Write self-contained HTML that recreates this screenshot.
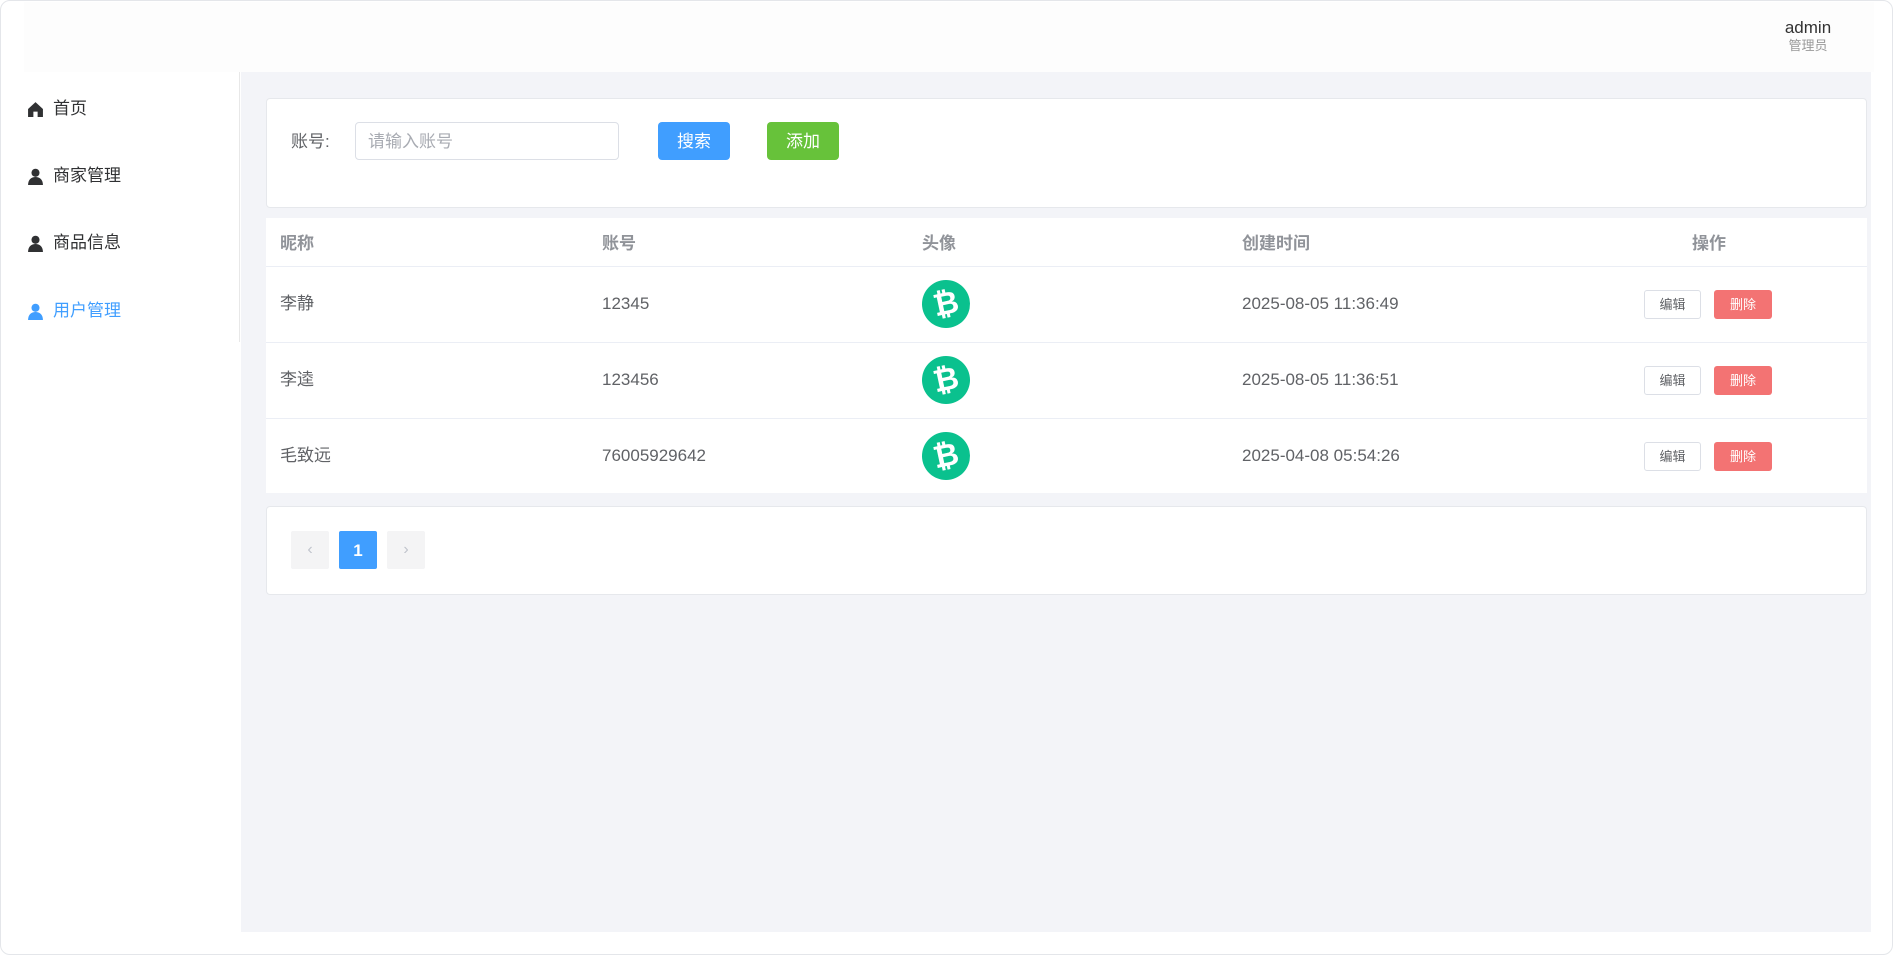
<!DOCTYPE html>
<html><head><meta charset="utf-8"><style>
*{box-sizing:border-box;margin:0;padding:0}
body{width:1893px;height:955px;background:#fff;font-family:"Liberation Sans","Noto Sans CJK SC",sans-serif;color:#606266;overflow:hidden;position:relative}
.frame{position:absolute;left:0;top:0;width:1893px;height:955px;border:1px solid #e4e6ea;border-radius:10px}
.header{position:absolute;left:24px;top:2px;width:1850px;height:70px;background:#fdfdfd}
.user{position:absolute;left:1782px;top:18px;width:52px;text-align:center}
.user .n{font-size:17px;color:#333;line-height:20px}
.user .r{font-size:13px;color:#999;line-height:15px}
.side{position:absolute;left:0;top:72px;width:240px;height:270px;border-right:1px solid #e8e8e8}
.mi{position:absolute;left:27px;height:24px;font-size:17px;line-height:24px;color:#303133;display:flex;align-items:center;gap:9px}
.mi.a{color:#409eff}
.main{position:absolute;left:241px;top:72px;width:1630px;height:860px;background:#f3f4f8}
.card{position:absolute;background:#fff;border:1px solid #e6e8ec;border-radius:4px}
.c{display:flex;align-items:center;justify-content:center;line-height:1}
.btn{position:absolute;color:#fff;font-size:17px;border-radius:4px}
.th{position:absolute;top:15px;height:22px;line-height:22px;font-size:17px;font-weight:bold;color:#909399}
.row{position:absolute;left:0;width:1601px;height:76px;border-top:1px solid #ebeef5}
.row span{position:absolute;top:26px;height:22px;line-height:22px;font-size:17px;color:#606266;display:flex;align-items:center}
.av{position:absolute;left:656px;top:13px;width:48px;height:48px;border-radius:50%;background:#0ac18e;color:#fff;font-size:31px;font-weight:bold;text-align:center;line-height:48px;transform:rotate(-12deg)}
.e{position:absolute;left:1378px;top:23px;width:57px;height:29px;border:1px solid #dcdfe6;border-radius:3px;font-size:13px;color:#606266}
.d{position:absolute;left:1448px;top:23px;width:58px;height:29px;background:#f37373;border-radius:3px;font-size:13px;color:#fff}
.pg{position:absolute;top:24px;width:38px;height:38px;background:#f4f4f5;border-radius:2px;color:#c0c4cc;font-size:16px}
</style></head><body>
<div class="frame"></div>
<div class="header"></div>
<div class="user"><div class="n">admin</div><div class="r">管理员</div></div>
<div class="side">
 <div class="mi" style="top:25px"><svg width="17" height="17" viewBox="0 0 16 16"><path d="M8 1L1 7.5V15h5v-5h4v5h5V7.5z" fill="#303133"/></svg>首页</div>
 <div class="mi" style="top:92px"><svg width="17" height="17" viewBox="0 0 16 16"><circle cx="8" cy="4.5" r="3.8" fill="#303133"/><path d="M1 16c0-5 3-7.5 7-7.5s7 2.5 7 7.5z" fill="#303133"/></svg>商家管理</div>
 <div class="mi" style="top:159px"><svg width="17" height="17" viewBox="0 0 16 16"><circle cx="8" cy="4.5" r="3.8" fill="#303133"/><path d="M1 16c0-5 3-7.5 7-7.5s7 2.5 7 7.5z" fill="#303133"/></svg>商品信息</div>
 <div class="mi a" style="top:227px"><svg width="17" height="17" viewBox="0 0 16 16"><circle cx="8" cy="4.5" r="3.8" fill="#409eff"/><path d="M1 16c0-5 3-7.5 7-7.5s7 2.5 7 7.5z" fill="#409eff"/></svg>用户管理</div>
</div>
<div class="main">
 <div class="card" style="left:25px;top:26px;width:1601px;height:110px">
  <div class="c" style="position:absolute;left:24px;top:23px;height:38px;font-size:17px;color:#606266">账号:</div>
  <div class="c" style="position:absolute;left:88px;top:23px;width:264px;height:38px;border:1px solid #dcdfe6;border-radius:4px;font-size:17px;color:#a8abb2;padding:0 12px;justify-content:flex-start">请输入账号</div>
  <div class="btn c" style="left:391px;top:23px;width:72px;height:38px;background:#409eff">搜索</div>
  <div class="btn c" style="left:500px;top:23px;width:72px;height:38px;background:#67c23a">添加</div>
 </div>
 <div class="card" style="left:25px;top:146px;width:1601px;height:275px;border:none;border-radius:0">
  <div class="th" style="left:14px">昵称</div>
  <div class="th" style="left:336px">账号</div>
  <div class="th" style="left:656px">头像</div>
  <div class="th" style="left:976px">创建时间</div>
  <div class="th" style="left:1426px">操作</div>
  <div class="row" style="top:48px"><span style="left:14px">李静</span><span style="left:336px">12345</span><div class="av">₿</div><span style="left:976px">2025-08-05 11:36:49</span><div class="e c">编辑</div><div class="d c">删除</div></div>
  <div class="row" style="top:124px"><span style="left:14px">李逵</span><span style="left:336px">123456</span><div class="av">₿</div><span style="left:976px">2025-08-05 11:36:51</span><div class="e c">编辑</div><div class="d c">删除</div></div>
  <div class="row" style="top:200px"><span style="left:14px">毛致远</span><span style="left:336px">76005929642</span><div class="av">₿</div><span style="left:976px">2025-04-08 05:54:26</span><div class="e c">编辑</div><div class="d c">删除</div></div>
 </div>
 <div class="card" style="left:25px;top:434px;width:1601px;height:89px">
  <div class="pg c" style="left:24px">‹</div>
  <div class="pg c" style="left:72px;background:#409eff;color:#fff;font-weight:bold;font-size:17px">1</div>
  <div class="pg c" style="left:120px">›</div>
 </div>
</div>
</body></html>
